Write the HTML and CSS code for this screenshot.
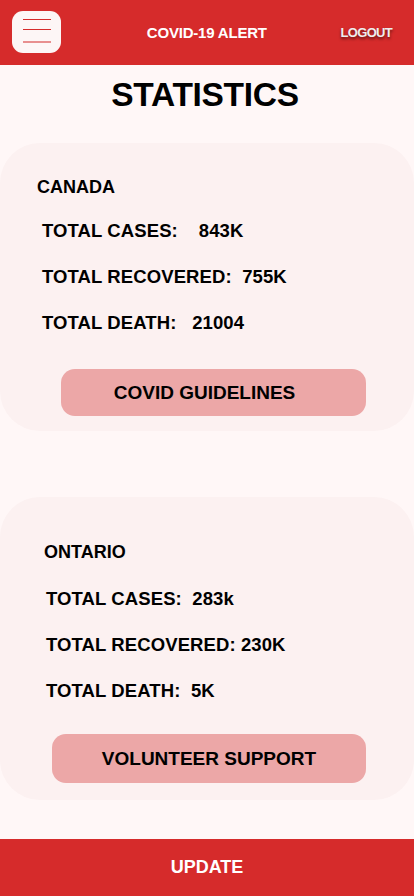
FILE: index.html
```html
<!DOCTYPE html>
<html>
<head>
<meta charset="utf-8">
<link rel="stylesheet" href="styles.css">
</head>
<body>
<div class="app">
  <header class="topbar">
    <button class="menu" aria-label="menu">
      <span class="bar"></span>
      <span class="bar"></span>
      <span class="bar light"></span>
    </button>
    <div class="brand">COVID-19 ALERT</div>
    <div class="logout">LOGOUT</div>
  </header>
  <main class="main">
    <h1 class="title">STATISTICS</h1>
    <section class="card card-canada">
      <div class="region">CANADA</div>
      <div class="stats">
        <div class="stat">TOTAL CASES:    843K</div>
        <div class="stat">TOTAL RECOVERED:  755K</div>
        <div class="stat">TOTAL DEATH:   21004</div>
      </div>
      <button class="action">COVID GUIDELINES</button>
    </section>
    <section class="card card-ontario">
      <div class="region">ONTARIO</div>
      <div class="stats">
        <div class="stat">TOTAL CASES:  283k</div>
        <div class="stat">TOTAL RECOVERED: 230K</div>
        <div class="stat">TOTAL DEATH:  5K</div>
      </div>
      <button class="action">VOLUNTEER SUPPORT</button>
    </section>
  </main>
  <footer class="footer">UPDATE</footer>
</div>
</body>
</html>
```
FILE: styles.css
```css
* { box-sizing: border-box; }
html, body { margin: 0; padding: 0; }
body {
  background: #fff7f7;
  font-family: "Liberation Sans", Arial, sans-serif;
  font-weight: 700;
  color: #000;
}
.app {
  width: 414px;
  height: 896px;
  display: flex;
  flex-direction: column;
  overflow: hidden;
}
.topbar {
  height: 65px;
  flex: none;
  background: #d62b2b;
  display: flex;
  align-items: center;
  padding: 0 22px 0 12px;
}
.menu {
  width: 49px;
  height: 42px;
  margin-top: -1px;
  border: none;
  border-radius: 11px;
  background: #fdf6f6;
  padding: 8px 10px 0 11px;
  display: flex;
  flex-direction: column;
  align-items: stretch;
  justify-content: flex-start;
}
.bar {
  display: block;
  height: 1px;
  background: #d62b2b;
  margin-bottom: 9px;
}
.bar.light {
  background: #e88f8f;
  height: 2px;
  margin-top: 2px;
}
.brand {
  flex: 1;
  text-align: center;
  color: #fff;
  font-size: 15px;
  letter-spacing: -0.2px;
  padding-left: 12px;
}
.logout {
  color: #eeeeee;
  font-size: 13px;
  letter-spacing: -0.7px;
  text-shadow: 0 2px 3px rgba(0,0,0,0.55);
}
.main {
  flex: 1;
  display: flex;
  flex-direction: column;
}
.title {
  margin: 0;
  padding: 10px 4px 0 0;
  font-size: 33.5px;
  line-height: 40px;
  letter-spacing: -0.3px;
  text-align: center;
}
.card {
  width: 414px;
  background: #fcf1f1;
  border-radius: 40px;
  display: flex;
  flex-direction: column;
}
.card-canada {
  margin-top: 28px;
  padding: 34px 0 15px 37px;
}
.card-ontario {
  margin-top: 66px;
  padding: 45px 0 17px 44px;
}
.region {
  font-size: 18px;
  line-height: 20px;
}
.stats {
  display: flex;
  flex-direction: column;
  gap: 24px;
  white-space: pre;
  font-size: 18.5px;
  letter-spacing: 0.1px;
  line-height: 22px;
}
.card-canada .stats { margin: 23px 0 0 5px; }
.card-ontario .stats { margin: 26px 0 0 2px; }
.action {
  border: none;
  background: #eca7a7;
  border-radius: 14px;
  font-family: "Liberation Sans", Arial, sans-serif;
  font-weight: 700;
  font-size: 19px;
  color: #000;
  padding: 0;
}
.card-canada .action {
  margin: 35px 0 0 24px;
  width: 305px;
  height: 47px;
  padding-right: 18px;
}
.card-ontario .action {
  margin: 32px 0 0 8px;
  width: 314px;
  height: 49px;
}
.footer {
  height: 57px;
  flex: none;
  background: #d62b2b;
  color: #fff;
  font-size: 18px;
  display: flex;
  align-items: center;
  justify-content: center;
}
```
